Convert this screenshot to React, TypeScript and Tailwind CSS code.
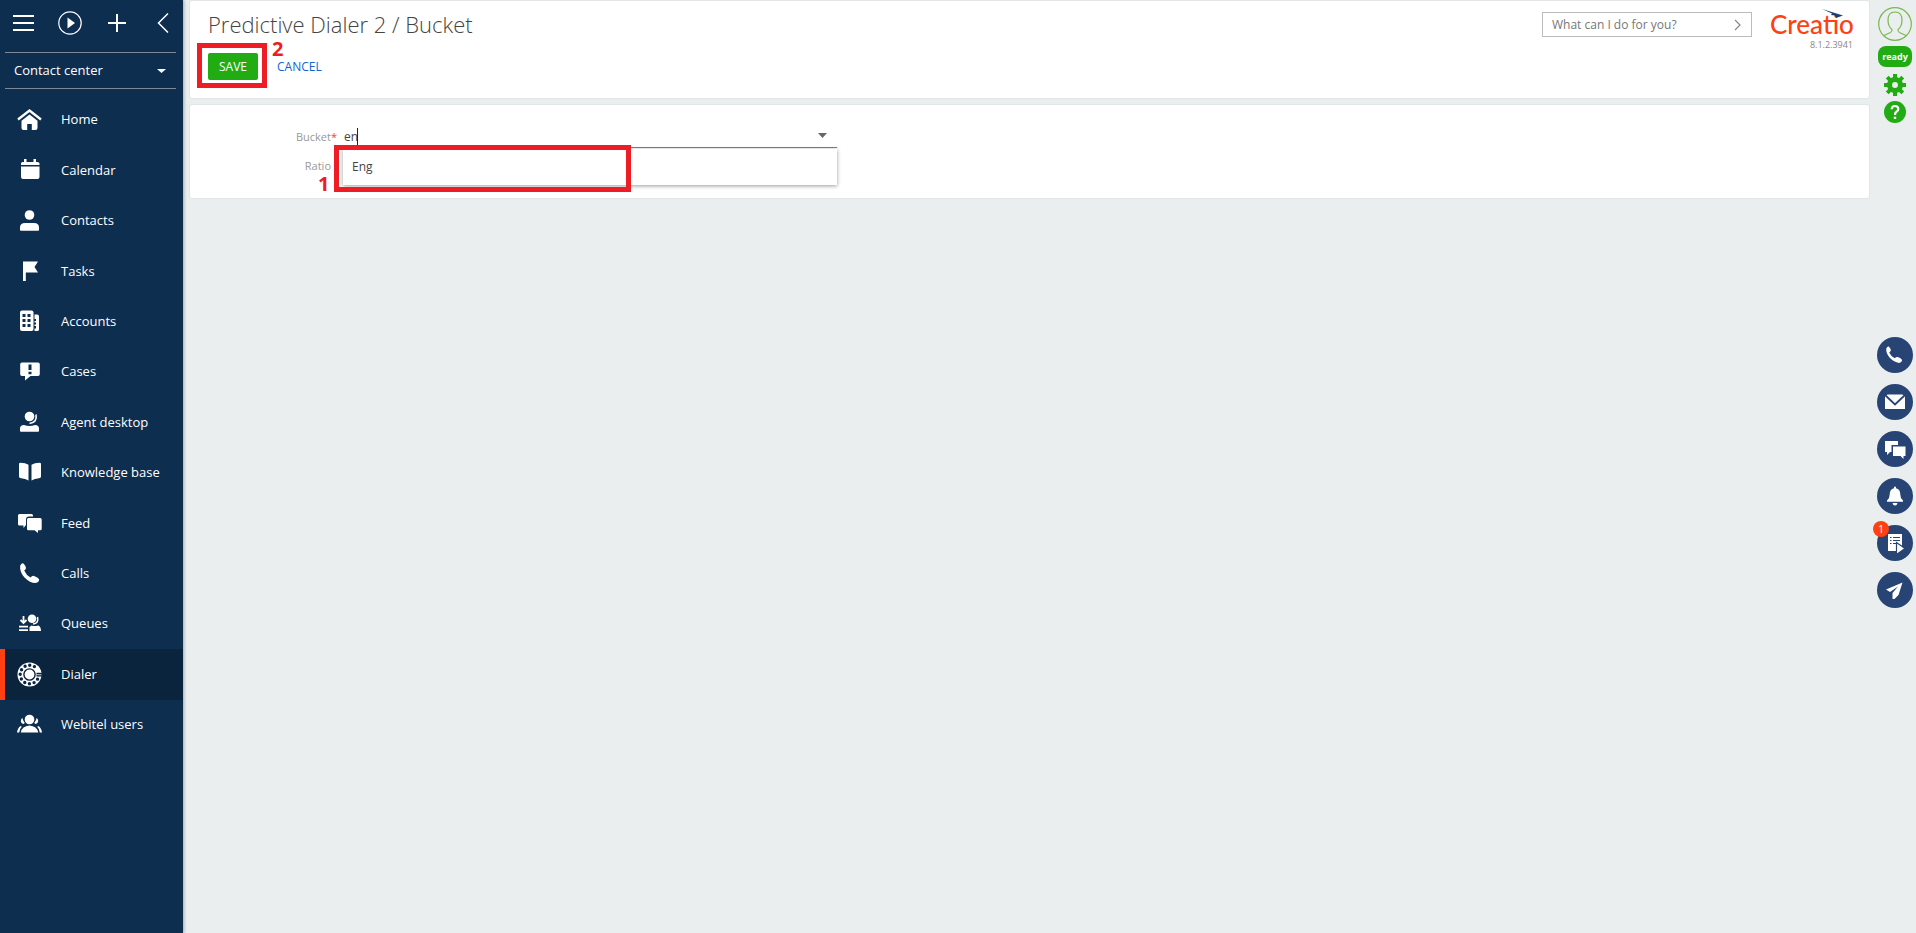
// Imports
import { useState } from 'react'
import type { ReactNode } from 'react'

type Item = {
  name: string
  icon: ReactNode
}

const bg = '#0e2e50'

const menu: Item[] = [
  {
    name: 'Home',
    icon: (
      <>
        <path d="M1 11.5 12.5 2.5 24 11.5" fill="none" stroke="currentColor" strokeWidth="2.4" />
        <path d="m12.5 6.5-8 6.3V20q0 2 2 2h3.700v-6h4.600v6h3.700q2 0 2-2v-7.200z" />
      </>
    )
  },
  {
    name: 'Calendar',
    icon: (
      <path d="M4 7V5.500Q4 4 5.500 4H7V1h2.500v3h7V1H19v3h1.500Q22.500 4 22.500 5.500V7zM4 8.500h18.500V19q0 2-2 2H6q-2 0-2-2z" />
    )
  },
  {
    name: 'Contacts',
    icon: (
      <>
        <circle cx="12.5" cy="7" r="4.800" />
        <path d="M3 22v-2.500q0-4.500 5-4.500h9q5 0 5 4.500V22q0 .8-1 .8H4q-1 0-1-.8z" />
      </>
    )
  },
  { name: 'Tasks', icon: <path d="M6 2.500h15L17.500 8l3.500 5.500H8.800V22H6z" /> },
  {
    name: 'Accounts',
    icon: (
      <>
        <path d="M17.500 5.500H20q2 0 2 2v13q0 1.500-2 1.500h-2.500v-2.500H19V17h-1.500v-1.500H19v-2h-1.500V12H19v-2h-1.500z" />
        <rect x="3" y="1.5" width="13.500" height="20.500" rx="2" />
        <path
          d="M5.500 5h3v3h-3zm5 0h3v3h-3zM5.500 10h3v3h-3zm5 0h3v3h-3zM5.500 15h3v3h-3zm5 0h3v3h-3z"
          fill={bg}
        />
      </>
    )
  },
  {
    name: 'Cases',
    icon: (
      <>
        <path d="M5 2.500h16q1.800 0 1.800 1.800v9.900q0 1.800-1.800 1.800h-7.500L8 20.500V16H5q-1.800 0-1.800-1.800V4.300Q3.200 2.500 5 2.500z" />
        <path d="M11.500 4.500h3v5.500h-3zm0 7.200h3v2.600h-3z" fill={bg} />
      </>
    )
  },
  {
    name: 'Agent desktop',
    icon: (
      <>
        <circle cx="12.5" cy="6.500" r="4.800" />
        <path d="M19 4.500q1.500 8-6.500 9" fill="none" stroke="currentColor" strokeWidth="1.600" />
        <path d="M3 21v-2.500q0-3.500 4-3.500 5.500 2 11 0 4 0 4 3.500V21q0 .8-1 .8H4q-1 0-1-.8z" />
      </>
    )
  },
  {
    name: 'Knowledge base',
    icon: (
      <path d="M2 4q0-1.200 1.500-1.200 5 0 8 2v15.700q-3-1.800-7.500-2.200Q2 18 2 16.500zM24 4q0-1.200-1.500-1.200-5 0-8 2v15.700q3-1.800 7.500-2.200 2-.3 2-1.800z" />
    )
  },
  {
    name: 'Feed',
    icon: (
      <path d="M2.500 3h12q1.500 0 1.500 1.500v1h-4Q9 5.500 9 8.500V14l-2.500 3v-2.500h-4Q1 14.500 1 13V4.500Q1 3 2.500 3zM11.500 7h11.700q1.500 0 1.500 1.500v9.300q0 1.500-1.500 1.500H21V22l-3.500-2.700h-6Q10 19.300 10 17.800V8.500Q10 7 11.500 7z" />
    )
  },
  {
    name: 'Calls',
    icon: (
      <path d="M3.200 4.500Q5 1.500 6.500 2.400q2.600 2.800 2.500 4.600-.2 1.500-1.800 2.600 2 4.700 6.300 7 1.700-2.200 3.600-1.600 3.800 1.500 5 3.300.3 3-3.600 3.700Q13 22 7.500 16.500 2.500 11 3.200 4.500z" />
    )
  },
  {
    name: 'Queues',
    icon: (
      <>
        <path d="M6.500 4v6.500M3.500 8l3 3 3-3" fill="none" stroke="currentColor" strokeWidth="1.800" />
        <path d="M2 13.700h9v1.800H2zm0 3.600h9v1.800H2z" />
        <circle cx="15" cy="6.800" r="4.300" />
        <path d="M20.500 5q1.500 6.500-4.500 7" fill="none" stroke="currentColor" strokeWidth="1.500" />
        <path d="M12.500 19.100v-4l2-1.600q3 1 6.500 0 3 .7 3 5.600z" />
      </>
    )
  },
  {
    name: 'Dialer',
    icon: (
      <>
        <circle cx="12.5" cy="12.500" r="12" />
        <circle cx="12.5" cy="12.500" r="5.600" fill="none" stroke="#0b243d" strokeWidth="1.400" />
        <circle
          cx="12.5"
          cy="12.500"
          r="9.300"
          fill="none"
          stroke="#0b243d"
          strokeWidth="3.400"
          strokeLinecap="round"
          strokeDasharray="0 4.869"
        />
        <path d="m17.500 8 3.500-4.500 3.500 7H19z" />
        <path d="M19.500 10.800H25v3.700h-5.500z" fill="#0b243d" />
        <path d="M19.500 12h5v1.300h-5z" opacity=".6" />
      </>
    )
  },
  {
    name: 'Webitel users',
    icon: (
      <>
        <circle cx="12.5" cy="7.500" r="4.800" />
        <path d="M5.500 6Q4 6.500 3.800 9q.2 2.500 2.400 3 1.300-.3 1.500-1.200Q5.500 8.500 5.500 6zM19.500 6q1.500.5 1.700 3-.2 2.500-2.400 3-1.300-.3-1.500-1.200Q19.500 8.500 19.500 6z" />
        <path d="M3.800 20.500Q5 14 12.500 13.500q7.500.5 8.700 7zM0 20.500q.5-4.500 3.500-6.500l1.300.8Q2.500 17 2.200 20.500zM25 20.500q-.5-4.500-3.500-6.500l-1.300.8q2.300 2.200 2.600 5.700z" />
      </>
    )
  }
]

const channels: Item[] = [
  {
    name: 'Phone',
    icon: (
      <path d="M9.300 11.500q1.300-2.700 2.500-1.900 2 2.200 2 3.800-.2 1.200-1.600 2 1.800 4 5.600 5.900 1.400-1.800 3-1.300 3.200 1.200 4.200 2.800.2 2.500-3 3.100-4.900-.6-9.300-5.100-3.900-4.600-3.400-9.300z" />
    )
  },
  {
    name: 'Email',
    icon: (
      <>
        <path d="M8 11h20v14H8z" />
        <path d="m8 11 10 9.500L28 11" fill="none" stroke="#274475" strokeWidth="1.800" />
        <path d="M10 10.500h16l-8 7.500z" />
      </>
    )
  },
  {
    name: 'Chats',
    icon: (
      <path d="M8 10h13v4h-6.500v7H13l-3 3v-3H8zM16 15.500h12.500V25h-2v3l-3-3H16z" />
    )
  },
  {
    name: 'Notifications',
    icon: (
      <path d="M17 9.500q0-1 1-1t1 1v.7q4.300 1 4.300 6.300 0 4 2.700 6v1.300H10v-1.300q2.700-2 2.700-6 0-5.300 4.300-6.300zM15.500 25h5q-.5 2.500-2.500 2.500T15.500 25z" />
    )
  },
  {
    name: 'Processes',
    icon: (
      <>
        <path d="M11 9h14v17H11z" />
        <path
          d="M13 12.500h1.500M16 12.500h7M13 15.500h1.500M16 15.500h7M13 18.500h1.500M16 18.500h3"
          stroke="#274475"
          strokeWidth="1.200"
        />
        <path d="m19.500 17.500 8.500 6-8.500 6z" stroke="#274475" strokeWidth="1.200" />
      </>
    )
  },
  {
    name: 'Send',
    icon: <path d="M25.500 10.500 9 17.500l4 2.500 8-5.500-5.500 6.500v6h2l4-4z" />
  }
]

function Sidebar(): React.JSX.Element {
  const [active, setActive] = useState('Dialer')

  return (
    <aside className="w-[183px] shrink-0 bg-[#0e2e50] text-white shadow-[1px_0_3px_rgba(0,0,0,0.3)]">
      <div className="flex h-[52px] items-center gap-6 pr-3.5 pb-[6px] pl-[13px]">
        <button type="button" aria-label="Menu">
          <svg width="21" height="18" stroke="currentColor" strokeWidth="2">
            <path d="M0 2h21M0 9h21M0 16h21" />
          </svg>
        </button>
        <button type="button" aria-label="Run process">
          <svg width="24" height="24" fill="currentColor">
            <circle cx="12" cy="12" r="11.200" fill="none" stroke="currentColor" strokeWidth="1.200" />
            <path d="m9.500 6.500 7.500 5.500-7.500 5.500z" />
          </svg>
        </button>
        <button type="button" aria-label="Quick add">
          <svg width="20" height="18" stroke="currentColor" strokeWidth="2">
            <path d="M11 0v18M2 9h18" />
          </svg>
        </button>
        <button type="button" aria-label="Collapse" className="ml-auto">
          <svg width="12" height="20" fill="none" stroke="currentColor" strokeWidth="1.500">
            <path d="M11 .5 1.500 10l9.500 9.500" />
          </svg>
        </button>
      </div>

      <button
        type="button"
        className="ml-[5px] flex h-[37px] w-[171px] items-center justify-between border-y border-[#7d8899] pr-2.5 pl-[9px] text-[13px]"
      >
        Contact center
        <svg width="9" height="4" fill="currentColor">
          <path d="M0 0h9L4.500 4z" />
        </svg>
      </button>

      <nav className="mt-1.5 flex h-[655px] flex-col">
        {menu.map((item) => (
          <button
            key={item.name}
            type="button"
            onClick={() => setActive(item.name)}
            className={
              item.name === active
                ? 'flex flex-1 items-center gap-[19px] border-l-5 border-[#ff4013] bg-[#0b243d] pl-3 text-[13px]'
                : 'flex flex-1 items-center gap-[19px] border-l-5 border-transparent pl-3 text-[13px]'
            }
          >
            <svg width="25" height="25" viewBox="0 0 25 25" fill="currentColor">
              {item.icon}
            </svg>
            {item.name}
          </button>
        ))}
      </nav>
    </aside>
  )
}

function Header(): React.JSX.Element {
  return (
    <header className="mt-px flex h-[97px] justify-between rounded-xs bg-white shadow-[0_0_1px_1px_#e2e5e5]">
      <div className="pl-[18px]">
        <h1 className="mt-2 text-[22px] leading-[30px] font-light text-[#444]">
          Predictive Dialer 2 / Bucket
        </h1>
        <div className="mt-3.5 flex items-center text-[12px]">
          <div className="relative">
            <button type="button" className="h-[27px] w-[50px] rounded-xs bg-[#22ac14] text-white">
              SAVE
            </button>
            <div className="pointer-events-none absolute -top-2.5 -right-[9px] -bottom-2 -left-[11px] border-5 border-[#ee1c25]" />
            <span className="absolute -top-3 left-16 text-[20px] leading-4 font-bold text-[#ee1c25]">
              2
            </span>
          </div>
          <button type="button" className="ml-[19px] text-[#0d65d9]">
            CANCEL
          </button>
        </div>
      </div>

      <div className="flex gap-[18px] pr-4">
        <form className="mt-[11px] flex h-[25px] w-[210px] items-center border border-[#bcbcbc] pr-2.5 pl-[9px]">
          <input
            type="text"
            aria-label="Command line"
            placeholder="What can I do for you?"
            className="w-full min-w-0 text-[12px] text-[#444] outline-none placeholder:text-[#777]"
          />
          <button type="button" aria-label="Run">
            <svg width="7" height="12" fill="none" stroke="#888" strokeWidth="1.200">
              <path d="m1 1 5 5-5 5" />
            </svg>
          </button>
        </form>
        <div className="relative mt-2 w-[83px] text-right">
          <div className="font-[Lato] text-[26px] leading-[30px] font-medium text-[#ff4013]">
            Creatio
          </div>
          <svg className="absolute top-0 left-[52px]" width="21" height="10">
            <path d="M0 0 21 6.500 14 9 13 6.500 9 6 10 4.500z" fill="#1b3f77" />
          </svg>
          <div className="text-[9px] leading-3 text-[#888]">8.1.2.3941</div>
        </div>
      </div>
    </header>
  )
}

function BucketForm(): React.JSX.Element {
  const [bucket, setBucket] = useState('en')

  return (
    <form className="mt-[7px] h-[93px] rounded-xs bg-white pt-[17px] text-[12px] text-[#444] shadow-[0_0_1px_1px_#e2e5e5]">
      <div className="flex">
        <label
          htmlFor="bucket"
          className="w-[147px] pt-[5px] text-right text-[11px] leading-5 text-[#999]"
        >
          Bucket<span className="text-[#ff4013]">*</span>
        </label>
        <div className="relative ml-1.5 w-[494px]">
          <div className="flex h-[26px] items-center border-b border-[#0fa4e6] pr-2.5">
            <input
              id="bucket"
              type="text"
              value={bucket}
              onChange={(event) => setBucket(event.target.value)}
              className="w-full pt-1 pl-px leading-5 outline-none"
            />
            <svg width="9" height="7" fill="#666">
              <path d="M0 2h9L4.500 7z" />
            </svg>
          </div>
          <span className="absolute top-1.5 left-3.5 h-[17px] w-px bg-[#222]" />
          <ul className="absolute top-[27px] z-10 w-full bg-white shadow-[0_1px_4px_rgba(0,0,0,0.4)]">
            <li>
              <button type="button" className="h-9 w-full px-[9px] text-left">
                Eng
              </button>
            </li>
          </ul>
          <div className="pointer-events-none absolute top-[23px] -left-[9px] z-20 h-[47px] w-[297px] border-5 border-[#ee1c25]">
            <span className="absolute top-5 -left-[21px] text-[20px] leading-7 font-bold text-[#ee1c25]">
              1
            </span>
          </div>
        </div>
      </div>
      <div className="flex">
        <label
          htmlFor="ratio"
          className="w-[141px] pt-2 text-right text-[11px] leading-5 text-[#999]"
        >
          Ratio
        </label>
        <input
          id="ratio"
          type="text"
          className="ml-3 h-7 w-[494px] border-b border-[#ccc] outline-none"
        />
      </div>
    </form>
  )
}

function RightPanel(): React.JSX.Element {
  return (
    <aside className="flex w-[47px] shrink-0 flex-col items-center pt-[7px] pl-[5px]">
      <button type="button" aria-label="Profile">
        <svg width="34" height="34" fill="none" stroke="#79b84f" strokeWidth="1.200">
          <circle cx="17" cy="17" r="16.300" />
          <path d="M14 22.500q.5 2-1.500 3L6 28.500M20 22.500q-.5 2 1.500 3l6.500 3M14 22.500q-3.500-2.500-4-8.500-.5-9 7-9t7 9q-.5 6-4 8.500" />
        </svg>
      </button>
      <button
        type="button"
        className="mt-[5px] h-[21px] w-[34px] rounded-lg bg-[#22ac14] text-[9px] leading-5 font-bold text-white"
      >
        ready
      </button>
      <button type="button" aria-label="Settings" className="mt-[7px]">
        <svg width="22" height="22" viewBox="0 0 22 22" fill="#22ac14">
          <circle cx="11" cy="11" r="5.500" fill="none" stroke="#22ac14" strokeWidth="5" />
          <path
            d="M11 0v4M11 18v4M0 11h4M18 11h4M3.200 3.200l3 3M15.800 15.800l3 3M3.200 18.800l3-3M15.800 6.200l3-3"
            stroke="#22ac14"
            strokeWidth="4"
          />
        </svg>
      </button>
      <button type="button" aria-label="Help" className="mt-[5px]">
        <svg width="22" height="22" viewBox="0 0 22 22">
          <circle cx="11" cy="11" r="11" fill="#22ac14" />
          <path
            d="M7.700 8.300q.2-3.300 3.300-3.300t3.300 3q0 1.500-1.700 2.700T11 14"
            fill="none"
            stroke="#fff"
            strokeWidth="2.200"
          />
          <path d="M9.800 15.700h2.400V18H9.800z" fill="#fff" />
        </svg>
      </button>

      <div className="mt-[214px] flex flex-col gap-[11px]">
        {channels.map((channel) => (
          <button
            key={channel.name}
            type="button"
            aria-label={channel.name}
            className="relative size-9 rounded-full bg-[#274475] text-white"
          >
            <svg width="36" height="36" fill="currentColor">
              {channel.icon}
            </svg>
            {channel.name === 'Processes' && (
              <span className="absolute -top-1 -left-1 size-4 rounded-full bg-[#ff4013] text-[10px] leading-4">
                1
              </span>
            )}
          </button>
        ))}
      </div>
    </aside>
  )
}

function App(): React.JSX.Element {
  return (
    <div className="flex min-h-screen bg-[#eaeeee] font-['Open_Sans',sans-serif]">
      <Sidebar />
      <main className="min-w-0 flex-1 pl-[7px]">
        <Header />
        <BucketForm />
      </main>
      <RightPanel />
    </div>
  )
}

export default App
